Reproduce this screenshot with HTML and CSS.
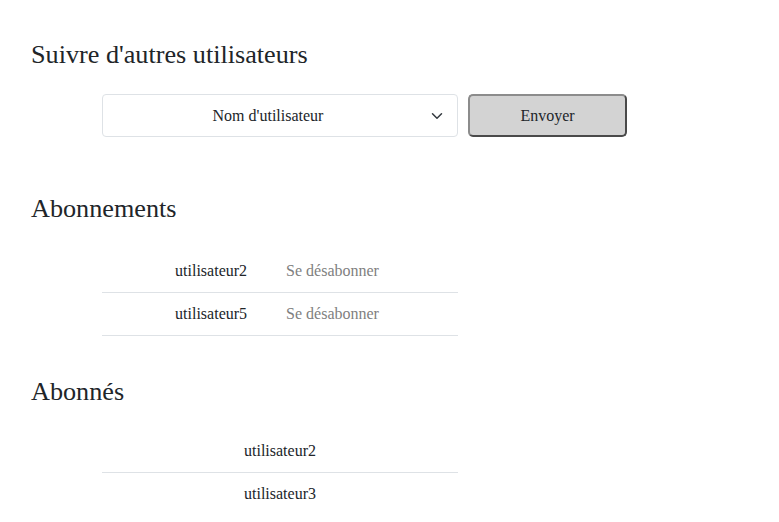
FILE: index.html
```html
<!DOCTYPE html>
<html lang="fr">
<head>
<meta charset="utf-8">
<title>Abonnements</title>
<link rel="stylesheet" href="styles.css">
</head>
<body>
<main class="page">
  <h2 class="heading heading-first">Suivre d'autres utilisateurs</h2>
  <form class="follow-form">
    <div class="select-box">
      <span class="select-value">Nom d'utilisateur</span>
      <svg class="chevron" width="16" height="12" viewBox="0 0 16 16"><path d="m2 5 6 6 6-6" fill="none" stroke="#343a40" stroke-linecap="round" stroke-linejoin="round" stroke-width="2"/></svg>
    </div>
    <button type="button" class="send-btn">Envoyer</button>
  </form>

  <h2 class="heading heading-subs">Abonnements</h2>
  <div class="list list-subs">
    <div class="row"><span>utilisateur2</span><a class="unsub">Se désabonner</a></div>
    <div class="row"><span>utilisateur5</span><a class="unsub">Se désabonner</a></div>
  </div>

  <h2 class="heading heading-followers">Abonnés</h2>
  <div class="list list-followers">
    <div class="row"><span>utilisateur2</span></div>
    <div class="row"><span>utilisateur3</span></div>
  </div>
</main>
</body>
</html>
```
FILE: styles.css
```css
* { box-sizing: border-box; }
html, body { margin: 0; padding: 0; background: #fff; }
body {
  font-family: "Liberation Serif", "Times New Roman", serif;
  font-size: 16px;
  line-height: 1.5;
  color: #212529;
}
.page { padding: 0 0 0 31px; }
.heading {
  font-size: 26.2px;
  font-weight: 400;
  line-height: 1.2;
  margin: 0;
  color: #212529;
}
.heading-first { padding-top: 39px; }
.heading-subs { margin-top: 56px; }
.heading-followers { margin-top: 40px; }

.follow-form {
  display: flex;
  gap: 10px;
  margin: 24px 0 0 71px;
}
.select-box {
  position: relative;
  width: 356px;
  height: 43px;
  border: 1px solid #dee2e6;
  border-radius: 4px;
  padding: 0 36px 0 12px;
  display: flex;
  align-items: center;
  justify-content: center;
  background: #fff;
}
.chevron { position: absolute; right: 12px; top: 15px; }
.send-btn {
  width: 159px;
  height: 43px;
  font-family: inherit;
  font-size: 16px;
  color: #212529;
  background: #d3d3d3;
  border: 2px solid;
  border-color: #8c8c8c #4a4a4a #4a4a4a #8c8c8c;
  border-radius: 5px;
}
.list {
  width: 356px;
  margin-left: 71px;
}
.list-subs { margin-top: 25px; }
.list-followers { margin-top: 23px; }
.row {
  display: flex;
  justify-content: center;
  gap: 39px;
  padding: 9px 0;
  border-bottom: 1px solid #dee2e6;
}
.list-subs .row { padding-right: 6px; }
.list-followers .row:last-child { border-bottom: none; }
.unsub { color: #808080; text-decoration: none; }
```
